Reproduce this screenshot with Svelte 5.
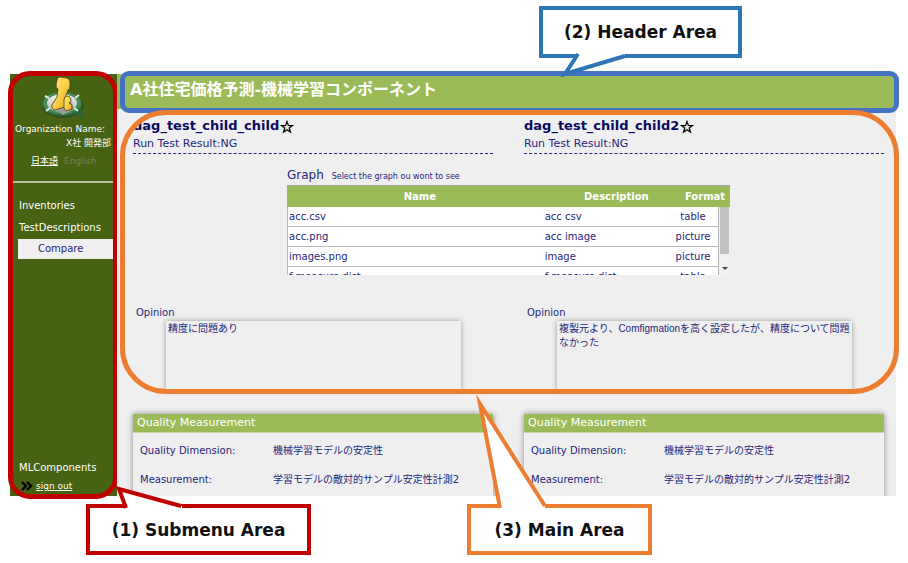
<script>
  const nav = ['Inventories', 'TestDescriptions'];
  const graphs = [
    { name: 'acc.csv', description: 'acc csv', format: 'table' },
    { name: 'acc.png', description: 'acc image', format: 'picture' },
    { name: 'images.png', description: 'image', format: 'picture' },
    { name: 'f-measure.dist', description: 'f-measure dist', format: 'table' }
  ];
  const tests = [
    { id: 'a', name: 'dag_test_child_child', result: 'NG', opinion: '精度に問題あり' },
    {
      id: 'b',
      name: 'dag_test_child_child2',
      result: 'NG',
      opinion: '複製元より、Comfigmationを高く設定したが、精度について問題なかった'
    }
  ];
  const quality = [
    ['Quality Dimension:', '機械学習モデルの安定性'],
    ['Measurement:', '学習モデルの敵対的サンプル安定性計測2']
  ];
</script>

<div class="page">
  <div class="app">
    <aside>
      <svg class="logo" viewBox="0 0 44 44" aria-hidden="true">
        <defs>
          <linearGradient id="gold" x1="0" y1="0" x2="1" y2="1">
            <stop offset="0" stop-color="#ffe978" />
            <stop offset="0.5" stop-color="#fad04a" />
            <stop offset="1" stop-color="#e0a012" />
          </linearGradient>
          <linearGradient id="silver" x1="0" y1="0" x2="0" y2="1">
            <stop offset="0" stop-color="#f4f6f2" />
            <stop offset="1" stop-color="#b4b8b2" />
          </linearGradient>
        </defs>
        <ellipse cx="22" cy="30" rx="21" ry="12" fill="#35501a" />
        <path d="M33 38 42 42 40 31Z" fill="#276338" />
        <ellipse cx="21" cy="28" rx="20" ry="12" fill="#2c6f40" />
        <ellipse cx="21" cy="27" rx="19" ry="11" fill="#4a8b58" />
        <ellipse cx="21" cy="27" rx="15" ry="9" fill="url(#silver)" />
        <path d="M4 20 8 22M34 22 38 19M5 35 9 32M33 32 37 35" stroke="#e4efdf" stroke-width="2" />
        <path d="M14 33 22 39 33 33 30 24Z" fill="#9a9e98" />
        <path d="M16 4Q16 1 19 1L26 2Q29 3 29 6V10Q29 13 27 14L24 22V31L14 34Q10 33 11 29L16 21 17 13Q15 12 15 9Z" fill="url(#gold)" stroke="#4c3f14" stroke-width="0.8" />
        <path d="M23 24Q23 20 26 20T30 23Q30 26 28 27L31 29V33L25 35 23 32Z" fill="url(#gold)" stroke="#4c3f14" stroke-width="0.8" />
      </svg>
      <p class="org">Organization Name:</p>
      <p class="org-name">X社 開発部</p>
      <p class="languages"><a href="#ja">日本語</a><span>English</span></p>
      <nav>
        {#each nav as item}
          <a href="#{item}">{item}</a>
        {/each}
        <a class="current" href="#compare">Compare</a>
      </nav>
      <div class="bottom">
        <a href="#mlcomponents">MLComponents</a>
        <a class="signout" href="#signout">
          <svg viewBox="0 0 12 10" aria-hidden="true"><path d="M1 1 5 5 1 9M6 1 10 5 6 9" fill="none" stroke="#000" stroke-width="2.4" /></svg>
          <span>sign out</span>
        </a>
      </div>
      <div class="ring ring-menu"></div>
    </aside>

    <div class="content">
      <header>
        <h1>A社住宅価格予測-機械学習コンポーネント</h1>
        <div class="ring ring-header"></div>
      </header>
      <main>
        <div class="columns">
          {#each tests as test}
            <section class="test">
              <h2>{test.name}<button aria-label="Favourite {test.name}"><svg viewBox="0 0 12 12"><path d="M6 1.4 7.2 4.7 10.6 4.8 7.9 6.9 8.9 10.3 6 8.3 3.1 10.3 4.1 6.9 1.4 4.8 4.8 4.7Z" fill="none" stroke="#000" stroke-width="1.1" /></svg></button></h2>
              <p>Run Test Result:{test.result}</p>
            </section>
          {/each}
        </div>

        <section class="graph">
          <h3>Graph <small>Select the graph ou wont to see</small></h3>
          <div class="list">
            <table>
              <thead>
                <tr><th>Name</th><th>Description</th><th>Format</th></tr>
              </thead>
              <tbody>
                {#each graphs as graph}
                  <tr><td>{graph.name}</td><td>{graph.description}</td><td>{graph.format}</td></tr>
                {/each}
              </tbody>
            </table>
            <div class="scrollbar" aria-hidden="true"><i class="thumb"></i><i class="arrow"></i></div>
          </div>
        </section>

        <div class="columns">
          {#each tests as test}
            <section class="opinion">
              <label for="opinion-{test.id}">Opinion</label>
              <textarea id="opinion-{test.id}" readonly value={test.opinion}></textarea>
            </section>
          {/each}
        </div>

        <div class="columns">
          {#each tests as test}
            <section class="quality">
              <h3>Quality Measurement</h3>
              <dl>
                {#each quality as [term, value]}
                  <dt>{term}</dt>
                  <dd>{value}</dd>
                {/each}
              </dl>
            </section>
          {/each}
        </div>
      </main>
      <div class="ring ring-main"></div>
    </div>
  </div>

  <div class="callout red">
    (1) Submenu Area
    <svg width="70" height="24" viewBox="0 0 70 24" aria-hidden="true">
      <path d="M9 24 3 5 66 22V24Z" fill="#fff" />
      <path d="M10 24 3 5 65 22" fill="none" stroke="#c00000" stroke-width="4" />
    </svg>
  </div>
  <div class="callout blue">
    (2) Header Area
    <svg width="80" height="30" viewBox="0 0 80 30" aria-hidden="true">
      <path d="M18 0 6 20 66 3V0Z" fill="#fff" />
      <path d="M19 0 6 20 66 2" fill="none" stroke="#2e75b6" stroke-width="4" />
    </svg>
  </div>
  <div class="callout orange">
    (3) Main Area
    <svg width="80" height="116" viewBox="0 0 80 116" aria-hidden="true">
      <path d="M28 116 8 12 73 114V116Z" fill="#fff" />
      <path d="M28 116 8 12 73 114" fill="none" stroke="#ed7d31" stroke-width="4" stroke-miterlimit="20" />
    </svg>
  </div>
</div>

<style>
  :global(body) {
    margin: 0;
    background: #fff;
  }
  .page {
    position: relative;
    box-sizing: border-box;
    min-height: 100vh;
    padding: 74px 12px 67px 10px;
    color: #26267a;
    font: 10px/14px 'DejaVu Sans', 'Noto Sans CJK JP', sans-serif;
  }
  h1, h2, h3, p, dl, dd { margin: 0; font-weight: normal; }
  a { color: inherit; text-decoration: none; }
  .app {
    display: flex;
    height: 422px;
  }
  aside {
    position: relative;
    box-sizing: border-box;
    flex: 0 0 107px;
    display: flex;
    flex-direction: column;
    background: #466213;
    color: #fff;
  }
  .logo {
    width: 44px;
    height: 44px;
    margin: 2px 0 2px 31px;
  }
  .org {
    padding-left: 5px;
    font-size: 9px;
    white-space: nowrap;
  }
  .org-name {
    padding-right: 6px;
    text-align: right;
    font-size: 9px;
  }
  .languages {
    display: flex;
    gap: 6px;
    margin-top: 4px;
    padding: 0 0 13px 21px;
    border-bottom: 2px solid #b5c1a1;
    font-size: 9px;
  }
  .languages a { text-decoration: underline; }
  .languages span { color: #74835a; }
  nav {
    display: flex;
    flex-direction: column;
    padding: 12px 0 0 8px;
    line-height: 22px;
  }
  nav a { padding-left: 1px; }
  nav .current {
    padding-left: 20px;
    background: #efefef;
    color: #26267a;
    line-height: 20px;
  }
  .bottom {
    display: flex;
    flex-direction: column;
    gap: 4px;
    margin-top: auto;
    padding: 0 0 3px 9px;
  }
  .signout {
    display: flex;
    align-items: center;
    gap: 3px;
    padding-left: 2px;
    font-size: 9px;
  }
  .signout span { text-decoration: underline; }
  .signout svg { width: 12px; height: 10px; }

  .content {
    position: relative;
    flex: 1;
    min-width: 0;
    display: flex;
    flex-direction: column;
    background: #efefef;
  }
  header {
    position: relative;
    flex: none;
    background: #9bbb59;
    color: #fff;
  }
  h1 {
    padding: 4px 12px 7px 13px;
    font-size: 16px;
    line-height: 24px;
    font-weight: bold;
  }
  main {
    flex: 1;
    min-height: 0;
    overflow: hidden;
    padding: 8px 12px 0 16px;
  }
  .columns {
    display: grid;
    grid-template-columns: 1fr 1fr;
    gap: 31px;
  }
  .test {
    padding-bottom: 1px;
    border-bottom: 1px dashed #26267a;
  }
  h2 {
    display: flex;
    align-items: center;
    color: #0a0a60;
    font-size: 13px;
    line-height: 18px;
    font-weight: bold;
  }
  h2 button {
    display: flex;
    margin: 2px 0 0 1px;
    padding: 0;
    border: 0;
    background: none;
  }
  h2 svg { width: 14px; height: 14px; }
  .test p { font-size: 11px; line-height: 17px; }

  .graph {
    width: 443px;
    max-width: 100%;
    margin: 13px auto 0;
  }
  h3 { font-size: 12px; line-height: 18px; }
  .graph h3 { line-height: 17px; }
  small { margin-left: 4px; font-size: 8px; }
  .list {
    position: relative;
    height: 90px;
    overflow: hidden;
  }
  table, thead, tbody { display: block; }
  tr { display: flex; }
  thead {
    border-top: 1px solid #a6a6a6;
    background: #9bbb59;
    color: #fff;
    line-height: 21px;
  }
  th { padding: 0; text-align: center; }
  th:nth-child(1) { flex: 0 0 60%; }
  th:nth-child(2) { flex: 1; }
  th:nth-child(3) { flex: 0 0 50px; }
  tbody {
    margin-right: 11px;
    border: solid #b8b8b8;
    border-width: 0 1px;
    background: #fff;
  }
  tbody tr { border-bottom: 1px solid #bbb; }
  td { padding: 0 1px; line-height: 19px; }
  td:nth-child(1) { flex: 0 0 59%; }
  td:nth-child(2) { flex: 1; }
  td:nth-child(3) { flex: 0 0 48px; text-align: center; }
  .scrollbar {
    position: absolute;
    top: 22px;
    right: 0;
    bottom: 0;
    width: 11px;
    background: #f1f1f1;
  }
  .thumb {
    display: block;
    height: 47px;
    margin: 0 1px;
    background: #c1c1c1;
  }
  .arrow {
    display: block;
    width: 0;
    margin: 13px auto 0;
    border: 3px solid transparent;
    border-top-color: #444;
    border-bottom: 0;
  }

  .opinion {
    display: flex;
    flex-direction: column;
    margin-top: 31px;
  }
  label { padding-left: 3px; }
  textarea {
    box-sizing: border-box;
    height: 70px;
    margin: 1px 32px 0 33px;
    padding: 1px 0 0 2px;
    border: 0;
    background: #efefef;
    box-shadow: 0 0 5px #999;
    color: inherit;
    font: 10px/14px 'Liberation Sans', 'Noto Sans CJK JP', sans-serif;
    resize: none;
    outline: none;
    overflow: hidden;
  }
  .quality {
    height: 100px;
    margin-top: 23px;
    box-shadow: 0 0 6px #888;
  }
  .quality h3 {
    padding-left: 4px;
    background: #9bbb59;
    border-bottom: 1px solid #c5d6a0;
    color: #fff;
    font-size: 11px;
  }
  dl {
    display: grid;
    grid-template-columns: 133px 1fr;
    row-gap: 15px;
    padding: 11px 0 0 7px;
  }

  .ring {
    position: absolute;
    box-sizing: border-box;
    pointer-events: none;
  }
  .ring-menu {
    inset: -3px -1px -3px -2px;
    border: 5px solid #c00000;
    border-radius: 22px;
  }
  .ring-header {
    inset: -3px -3px -4px 3px;
    border: 5px solid #4472c4;
    border-radius: 9px;
  }
  .ring-main {
    inset: 36px -3px 102px 3px;
    border: 5px solid #ed7d31;
    border-radius: 46px;
  }
  .callout {
    position: absolute;
    box-sizing: border-box;
    height: 51px;
    border: 4px solid;
    background: #fff;
    color: #111;
    font-size: 17px;
    line-height: 44px;
    font-weight: bold;
    text-align: center;
    white-space: nowrap;
  }
  .callout svg { position: absolute; overflow: visible; }
  .red { top: 504px; left: 86px; width: 225px; border-color: #c00000; }
  .red svg { top: -24px; left: 26px; }
  .blue { top: 6px; left: 539px; width: 203px; height: 52px; border-color: #2e75b6; }
  .blue svg { top: 44px; left: 16px; }
  .orange { top: 504px; left: 467px; width: 185px; border-color: #ed7d31; }
  .orange svg { top: -116px; left: 1px; }
</style>
